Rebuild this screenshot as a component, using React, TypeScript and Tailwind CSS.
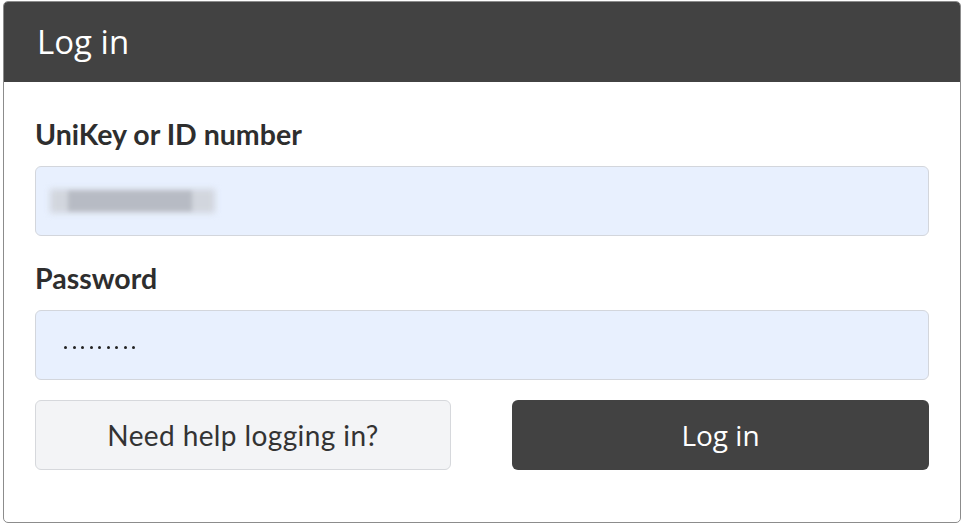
import React from 'react';

const labelFont = { fontFamily: 'Lato, "Open Sans", sans-serif' };

export default function App() {
  return (
    <div className="w-[966px] h-[526px] bg-white pt-[1px] pl-[3px]">
      <div className="w-[958px] h-[522px] border border-[#8c8c8c] rounded-[5px] overflow-hidden flex flex-col">
        {/* Header */}
        <div className="h-[80px] bg-[#424242] flex items-center pl-[33px] shrink-0">
          <h1 className="text-white text-[33px] font-['Open_Sans',sans-serif] leading-none -mt-[1px]">Log in</h1>
        </div>

        {/* Form */}
        <form className="flex flex-col px-[31px] pt-[36px]" style={labelFont}>
          <label className="text-[28.5px] font-bold text-[#2e2e2e] leading-[32px]">UniKey or ID number</label>
          <div className="mt-[16px] h-[70px] rounded-[6px] border border-[#d3d6dc] bg-[#e8f0fe] flex items-center pl-[10px]">
            <div className="relative w-[175px] h-[36px]">
              <div className="absolute left-[4px] top-[6px] w-[165px] h-[24px] bg-[#d2d6de] blur-[3px]" />
              <div className="absolute left-[22px] top-[8px] w-[124px] h-[20px] bg-[#b7bbc4] blur-[2px]" />
            </div>
          </div>

          <label className="mt-[26px] text-[28.5px] font-bold text-[#2e2e2e] leading-[32px]">Password</label>
          <div className="mt-[16px] h-[70px] rounded-[6px] border border-[#d3d6dc] bg-[#e8f0fe] flex items-center pl-[28px]">
            <div className="flex gap-[5.5px] mt-[4px]">
              {Array.from({ length: 9 }).map((_, i) => (
                <span key={i} className="w-[3px] h-[3px] rounded-full bg-[#222]" />
              ))}
            </div>
          </div>

          <div className="mt-[20px] flex justify-between">
            <button
              type="button"
              className="w-[416px] h-[70px] rounded-[6px] border border-[#d6d8dc] bg-[#f3f4f6] text-[28px] tracking-[0.4px] text-[#333]"
              style={labelFont}
            >
              Need help logging in?
            </button>
            <button
              type="button"
              className="w-[417px] h-[70px] rounded-[6px] bg-[#424242] text-white text-[28px] font-['Open_Sans',sans-serif]"
            >
              Log in
            </button>
          </div>
        </form>
      </div>
    </div>
  );
}
